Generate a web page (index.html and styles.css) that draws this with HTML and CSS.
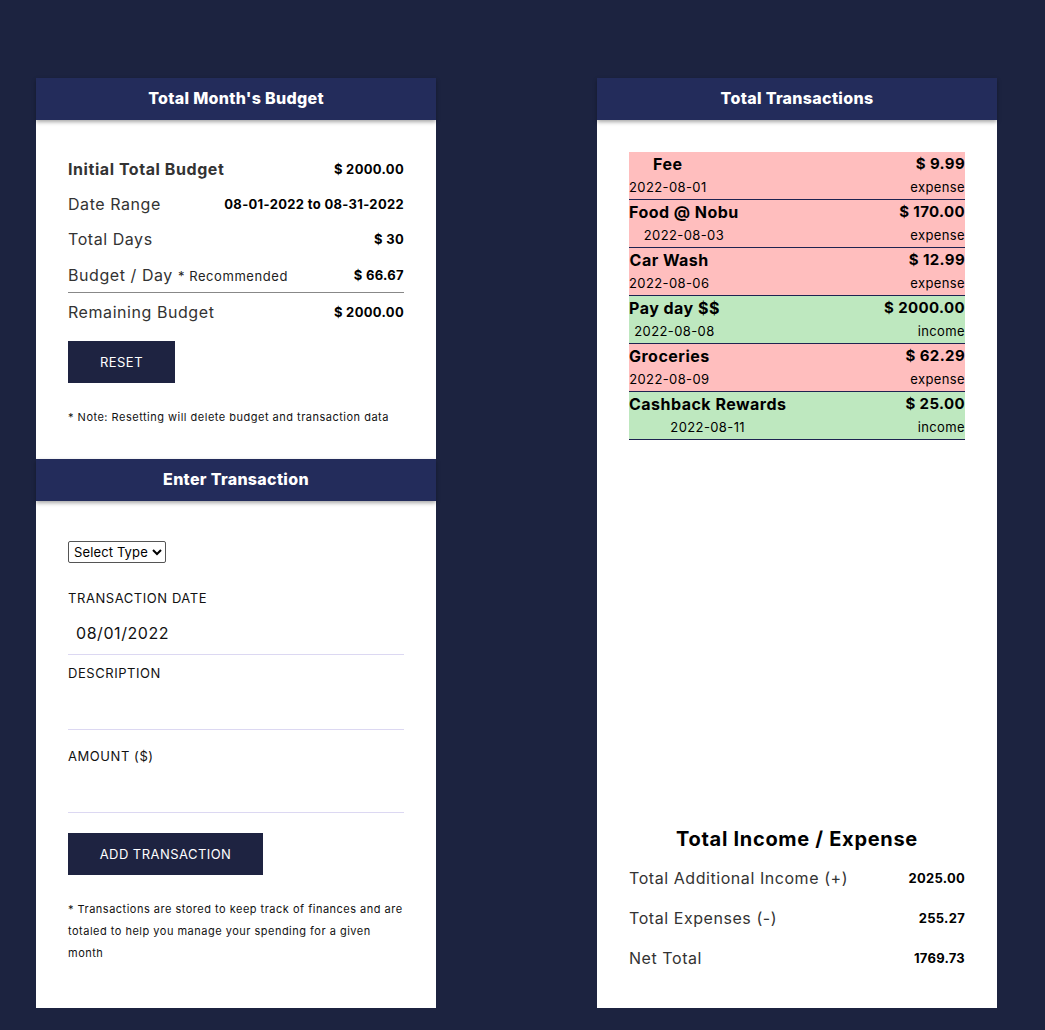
FILE: index.html
```html
<!DOCTYPE html>
<html>
<head>
<meta charset="utf-8">
<link rel="stylesheet" href="styles.css">
</head>
<body>
<div class="page">
  <div class="card">
    <div class="card-head">Total Month's Budget</div>
    <div class="budget-body">
      <div class="brow"><span class="blabel strong">Initial Total Budget</span><span class="bval">$ 2000.00</span></div>
      <div class="brow"><span class="blabel">Date Range</span><span class="bval">08-01-2022 to 08-31-2022</span></div>
      <div class="brow"><span class="blabel">Total Days</span><span class="bval">$ 30</span></div>
      <div class="brow brow-line"><span class="blabel">Budget / Day <small class="rec">* Recommended</small></span><span class="bval">$ 66.67</span></div>
      <div class="brow brow-last"><span class="blabel">Remaining Budget</span><span class="bval">$ 2000.00</span></div>
      <button class="btn btn-reset">RESET</button>
      <p class="note">* Note: Resetting will delete budget and transaction data</p>
    </div>
    <div class="card-head">Enter Transaction</div>
    <div class="form-body">
      <select class="type-select"><option>Select Type</option></select>
      <label class="flabel flabel-first">TRANSACTION DATE</label>
      <div class="finput">08/01/2022</div>
      <label class="flabel">DESCRIPTION</label>
      <div class="finput"></div>
      <label class="flabel flabel-amount">AMOUNT ($)</label>
      <div class="finput"></div>
      <button class="btn btn-add">ADD TRANSACTION</button>
      <p class="note note-long">* Transactions are stored to keep track of finances and are totaled to help you manage your spending for a given month</p>
    </div>
  </div>

  <div class="card">
    <div class="card-head">Total Transactions</div>
    <div class="tx-body">
      <div class="tx-list">
        <div class="tx expense"><div class="tx-left"><div class="tx-name">Fee</div><div class="tx-date">2022-08-01</div></div><div class="tx-right"><div class="tx-amt">$ 9.99</div><div class="tx-type">expense</div></div></div>
        <div class="tx expense"><div class="tx-left"><div class="tx-name">Food @ Nobu</div><div class="tx-date">2022-08-03</div></div><div class="tx-right"><div class="tx-amt">$ 170.00</div><div class="tx-type">expense</div></div></div>
        <div class="tx expense"><div class="tx-left"><div class="tx-name">Car Wash</div><div class="tx-date">2022-08-06</div></div><div class="tx-right"><div class="tx-amt">$ 12.99</div><div class="tx-type">expense</div></div></div>
        <div class="tx income"><div class="tx-left"><div class="tx-name">Pay day $$</div><div class="tx-date">2022-08-08</div></div><div class="tx-right"><div class="tx-amt">$ 2000.00</div><div class="tx-type">income</div></div></div>
        <div class="tx expense"><div class="tx-left"><div class="tx-name">Groceries</div><div class="tx-date">2022-08-09</div></div><div class="tx-right"><div class="tx-amt">$ 62.29</div><div class="tx-type">expense</div></div></div>
        <div class="tx income"><div class="tx-left"><div class="tx-name">Cashback Rewards</div><div class="tx-date">2022-08-11</div></div><div class="tx-right"><div class="tx-amt">$ 25.00</div><div class="tx-type">income</div></div></div>
      </div>
      <div class="summary">
        <h2 class="sum-title">Total Income / Expense</h2>
        <div class="srow"><span class="slabel">Total Additional Income (+)</span><span class="sval">2025.00</span></div>
        <div class="srow"><span class="slabel">Total Expenses (-)</span><span class="sval">255.27</span></div>
        <div class="srow"><span class="slabel">Net Total</span><span class="sval">1769.73</span></div>
      </div>
    </div>
  </div>
</div>
</body>
</html>
```

FILE: styles.css
```css
* { box-sizing: border-box; }
html, body { margin: 0; padding: 0; }
body {
  background: #1c2340;
  font-family: "Inter", "Open Sans", sans-serif;
  color: #000;
  letter-spacing: 0.035em;
}
.page {
  display: flex;
  align-items: stretch;
  gap: 161px;
  padding: 78px 0 0 36px;
  height: 1030px;
}
.card {
  width: 400px;
  height: 930px;
  background: #fff;
  display: flex;
  flex-direction: column;
}
.card-head {
  height: 42px;
  line-height: 41px;
  background: #232c5b;
  color: #fff;
  text-align: center;
  font-weight: 800;
  font-size: 16px;
  box-shadow: 0 2px 4px rgba(0,0,0,0.35);
  position: relative;
  z-index: 1;
  letter-spacing: 0.02em;
}
.budget-body {
  padding: 32px 32px 0 32px;
  height: 339px;
}
.brow {
  display: flex;
  justify-content: space-between;
  align-items: center;
  height: 35px;
  padding-bottom: 1px;
}
.brow-line { border-bottom: 1px solid #888; height: 36px; padding-bottom: 0; }
.brow-last { height: 36px; padding: 1px 0 0 0; }
.blabel { font-size: 16px; color: #333; }
.blabel.strong { font-weight: 700; }
.rec { font-size: 13px; color: #222; }
.bval { font-size: 13px; font-weight: 700; letter-spacing: 0.025em; }
.btn {
  display: block;
  border: none;
  background: #1e2341;
  color: #fff;
  font-family: inherit;
  font-size: 13px;
  letter-spacing: 0.035em;
  height: 42px;
  padding: 0;
}
.btn-reset { width: 107px; margin-top: 12px; }
.note {
  margin: 26px 0 0 0;
  font-size: 11px;
  line-height: 16px;
  color: #111;
  letter-spacing: 0.045em;
}
.form-body {
  padding: 40px 32px 0 32px;
  flex: 1;
}
.type-select {
  display: block;
  height: 22px;
  font-family: inherit;
  font-size: 13px;
  letter-spacing: 0.01em;
  border: 1px solid #555;
  border-radius: 2px;
  background: #fff;
  color: #000;
  padding: 0 1px;
}
.flabel {
  display: block;
  font-size: 13px;
  line-height: 20px;
  margin: 8px 0 10px 0;
  color: #111;
}
.flabel-first { margin-top: 25px; }
.flabel-amount { margin-top: 16px; }
.finput {
  height: 37px;
  border-bottom: 1px solid #dcd8f2;
  font-size: 16px;
  line-height: 30px;
  padding-left: 8px;
  color: #111;
}
.btn-add { width: 195px; margin-top: 20px; }
.note-long {
  margin-top: 23px;
  line-height: 22px;
}
.tx-body {
  flex: 1;
  display: flex;
  flex-direction: column;
  padding: 32px 32px 30px 32px;
}
.tx {
  display: flex;
  justify-content: space-between;
  border-bottom: 1px solid #1e2350;
}
.tx.expense { background: #ffbebe; }
.tx.income { background: #bee8bf; }
.tx-left { text-align: center; }
.tx-right { text-align: right; }
.tx-name {
  font-size: 16px;
  font-weight: 700;
  line-height: 24px;
  letter-spacing: 0.03em;
}
.tx-amt {
  font-size: 15px;
  font-weight: 700;
  line-height: 24px;
  letter-spacing: 0.025em;
}
.tx-date, .tx-type {
  font-size: 13px;
  line-height: 23px;
  letter-spacing: 0.03em;
}
.summary { margin-top: auto; }
.sum-title {
  margin: 0 0 4px 0;
  text-align: center;
  font-size: 20px;
  line-height: 30px;
  font-weight: 700;
  letter-spacing: 0.035em;
}
.srow {
  display: flex;
  justify-content: space-between;
  align-items: center;
  height: 40px;
}
.slabel { font-size: 16px; color: #333; }
.sval { font-size: 13px; font-weight: 700; letter-spacing: 0.02em; }
```
